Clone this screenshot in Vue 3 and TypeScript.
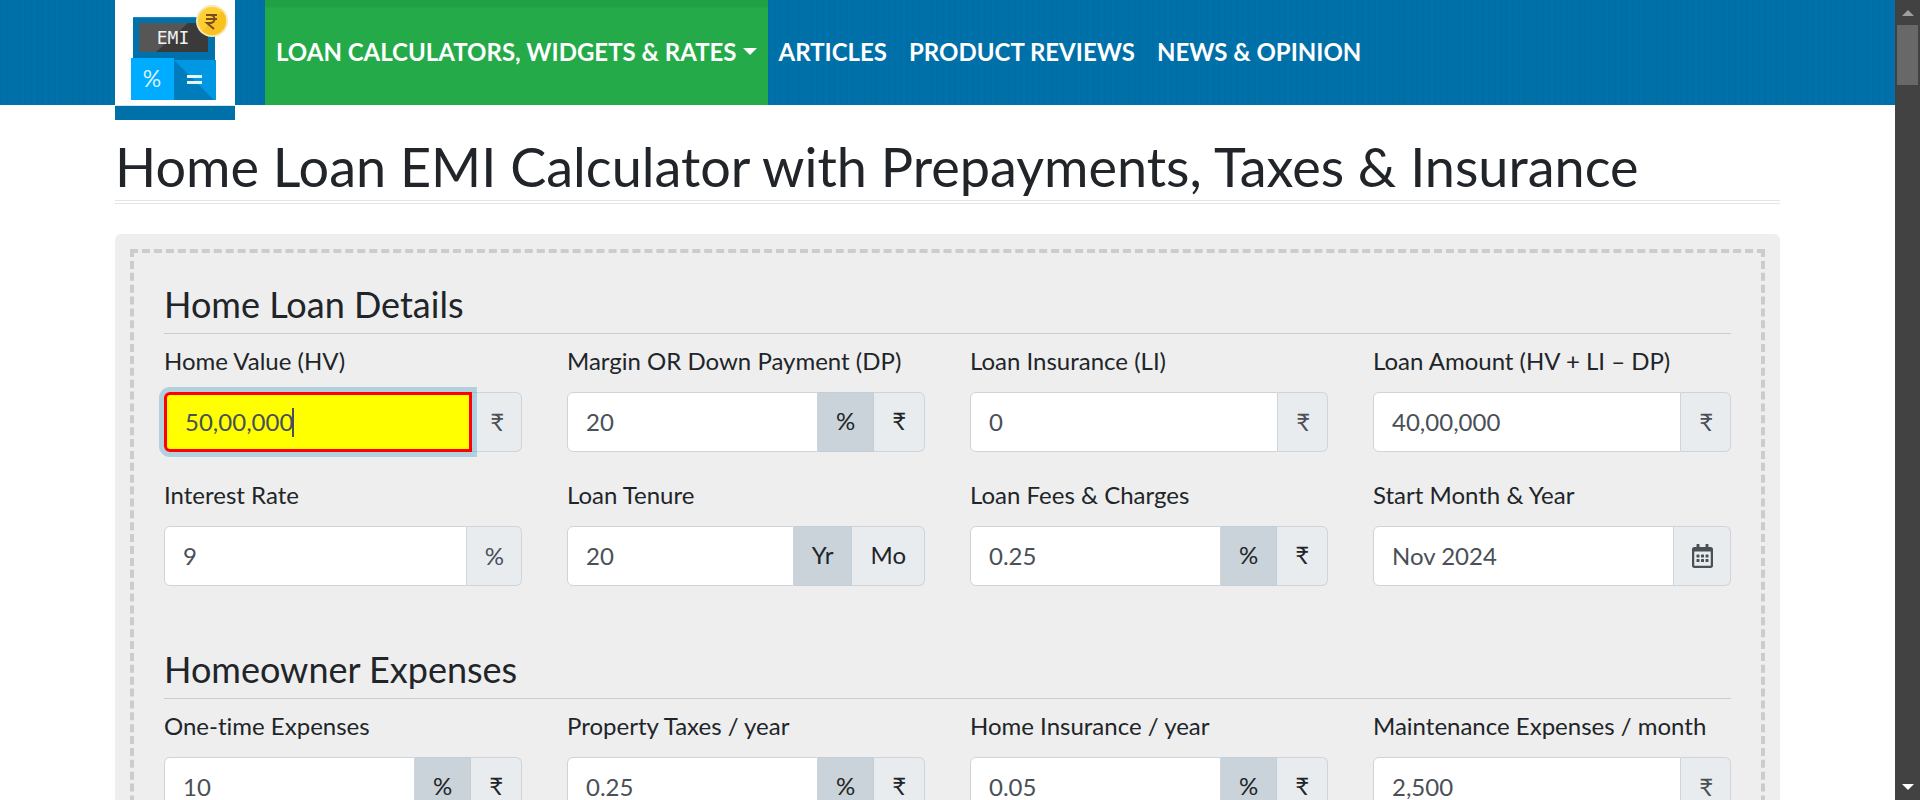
<script setup lang="ts">
import { reactive } from 'vue'

interface Field {
  id: string
  label: string
  value: string
  addon?: string
  icon?: boolean
  options?: string[]
  selected?: string
  active?: boolean
}

interface Section {
  title: string
  fields: Field[]
}

const navLinks: string[] = ['ARTICLES', 'PRODUCT REVIEWS', 'NEWS & OPINION']

const sections = reactive<Section[]>([
  {
    title: 'Home Loan Details',
    fields: [
      { id: 'home-value', label: 'Home Value (HV)', value: '50,00,000', addon: '₹', active: true },
      { id: 'down-payment', label: 'Margin OR Down Payment (DP)', value: '20', options: ['%', '₹'], selected: '%' },
      { id: 'loan-insurance', label: 'Loan Insurance (LI)', value: '0', addon: '₹' },
      { id: 'loan-amount', label: 'Loan Amount (HV + LI – DP)', value: '40,00,000', addon: '₹' },
      { id: 'interest-rate', label: 'Interest Rate', value: '9', addon: '%' },
      { id: 'loan-tenure', label: 'Loan Tenure', value: '20', options: ['Yr', 'Mo'], selected: 'Yr' },
      { id: 'loan-fees', label: 'Loan Fees & Charges', value: '0.25', options: ['%', '₹'], selected: '%' },
      { id: 'start-month', label: 'Start Month & Year', value: 'Nov 2024', icon: true },
    ],
  },
  {
    title: 'Homeowner Expenses',
    fields: [
      { id: 'one-time', label: 'One-time Expenses', value: '10', options: ['%', '₹'], selected: '%' },
      { id: 'property-taxes', label: 'Property Taxes / year', value: '0.25', options: ['%', '₹'], selected: '%' },
      { id: 'home-insurance', label: 'Home Insurance / year', value: '0.05', options: ['%', '₹'], selected: '%' },
      { id: 'maintenance', label: 'Maintenance Expenses / month', value: '2,500', addon: '₹' },
    ],
  },
])
</script>

<template>
  <div class="window">
    <div class="page">
      <header class="topbar">
        <a class="logo" href="#" aria-label="EMI Calculator home">
          <svg width="120" height="105" viewBox="0 0 120 105" aria-hidden="true">
            <rect x="18" y="17" width="82" height="43" fill="#0071ab" />
            <path d="M18 17H100V18H18Z" fill="#1a8cc4" />
            <rect x="24" y="23" width="69" height="29" fill="#565656" />
            <path d="M41 52 73 23H93V52Z" fill="#3a3a3a" />
            <rect x="16" y="58" width="43" height="42" fill="#00acff" />
            <rect x="59" y="60" width="42" height="40" fill="#0098e3" />
            <path d="M59 60 99 100H59Z" fill="#007cbd" />
            <text x="58" y="44" class="logo-emi">EMI</text>
            <text x="37" y="87" class="logo-percent">%</text>
            <path d="M72 75H87V78H72ZM72 81H87V84H72Z" fill="#e6f5fc" />
            <circle cx="97" cy="21" r="16" fill="#f7e7b4" />
            <circle cx="97" cy="21" r="14" fill="#ffd034" />
            <path d="M87 31 107 11A14 14 0 0 1 87 31Z" fill="#f8c221" />
            <path d="M91 15H102M91 19H102M92 15H95C101 15 101 23 95 23H92L99 29" fill="none" stroke="#7c4a1b" stroke-width="2" />
          </svg>
        </a>
        <nav class="nav" aria-label="Main">
          <a class="nav-link nav-current" href="#">LOAN CALCULATORS, WIDGETS &amp; RATES<span class="caret-down"></span></a>
          <a v-for="link in navLinks" :key="link" class="nav-link" href="#">{{ link }}</a>
        </nav>
      </header>

      <main class="content">
        <h1 class="title">Home Loan EMI Calculator with Prepayments, Taxes &amp; Insurance</h1>
        <form class="card" @submit.prevent>
          <div class="card-inner">
            <section v-for="section in sections" :key="section.title" class="section">
              <h2 class="section-title">{{ section.title }}</h2>
              <div class="grid">
                <div v-for="field in section.fields" :key="field.id" class="field">
                  <label class="field-label" :for="field.id">{{ field.label }}</label>
                  <div class="group">
                    <input
                      :id="field.id"
                      v-model="field.value"
                      class="control"
                      :class="{ 'control-active': field.active }"
                      type="text"
                    />
                    <span v-if="field.active" class="text-cursor"></span>
                    <span v-if="field.addon" class="addon">{{ field.addon }}</span>
                    <span v-if="field.icon" class="addon">
                      <svg width="21" height="24" viewBox="0 0 448 512" aria-hidden="true">
                        <path
                          fill="currentColor"
                          d="M148 288h-40c-6.600 0-12-5.400-12-12v-40c0-6.600 5.400-12 12-12h40c6.600 0 12 5.400 12 12v40c0 6.600-5.400 12-12 12zm108-12v-40c0-6.600-5.400-12-12-12h-40c-6.600 0-12 5.400-12 12v40c0 6.600 5.400 12 12 12h40c6.600 0 12-5.400 12-12zm96 0v-40c0-6.600-5.400-12-12-12h-40c-6.600 0-12 5.400-12 12v40c0 6.600 5.400 12 12 12h40c6.600 0 12-5.400 12-12zm-96 96v-40c0-6.600-5.400-12-12-12h-40c-6.600 0-12 5.400-12 12v40c0 6.600 5.400 12 12 12h40c6.600 0 12-5.400 12-12zm-96 0v-40c0-6.600-5.400-12-12-12h-40c-6.600 0-12 5.400-12 12v40c0 6.600 5.400 12 12 12h40c6.600 0 12-5.400 12-12zm192 0v-40c0-6.600-5.400-12-12-12h-40c-6.600 0-12 5.400-12 12v40c0 6.600 5.400 12 12 12h40c6.600 0 12-5.400 12-12zm96-260v352c0 26.500-21.500 48-48 48H48c-26.500 0-48-21.500-48-48V112c0-26.500 21.500-48 48-48h48V12c0-6.600 5.400-12 12-12h40c6.600 0 12 5.400 12 12v52h128V12c0-6.600 5.400-12 12-12h40c6.600 0 12 5.400 12 12v52h48c26.500 0 48 21.500 48 48zm-48 346V160H48v298c0 3.300 2.700 6 6 6h340c3.300 0 6-2.700 6-6z"
                        />
                      </svg>
                    </span>
                    <label
                      v-for="option in field.options"
                      :key="option"
                      class="unit"
                      :class="{ 'unit-selected': option === field.selected }"
                    >
                      <input v-model="field.selected" class="unit-radio" type="radio" :name="field.id + '-unit'" :value="option" />
                      {{ option }}
                    </label>
                  </div>
                </div>
              </div>
            </section>
          </div>
        </form>
      </main>
    </div>

    <div class="scrollbar" aria-hidden="true">
      <span class="arrow arrow-up"></span>
      <span class="thumb"></span>
      <span class="arrow arrow-down"></span>
    </div>
  </div>
</template>

<style>
body {
  margin: 0;
  overflow: hidden;
}
</style>

<style scoped>
.window {
  display: flex;
  height: 100vh;
  overflow: hidden;
  background: #fff;
  color: #212529;
  font-family: Lato, 'Liberation Sans', sans-serif;
  font-size: 24px;
  font-variant-ligatures: none;
  line-height: 36px;
}

.window *,
.window *::before {
  box-sizing: border-box;
}

.page {
  flex: 1;
  min-width: 0;
  overflow: hidden;
}

.topbar {
  display: flex;
  gap: 30px;
  height: 105px;
  padding: 0 115px;
  background:
    repeating-linear-gradient(90deg, rgba(0, 40, 90, 0.03) 0 2px, transparent 2px 6px),
    repeating-linear-gradient(90deg, rgba(0, 140, 200, 0.04) 0 3px, transparent 3px 11px),
    #0070a9;
}

.logo {
  position: relative;
  flex: none;
  width: 120px;
  background: #fff;
}

.logo::before {
  content: '';
  position: absolute;
  top: 105px;
  left: 0;
  width: 100%;
  height: 15px;
  border-top: 1px solid #d5e6ef;
  background: #0070a9;
}

.logo svg {
  display: block;
}

.logo-emi {
  fill: #f0f0f0;
  font-family: 'DejaVu Sans Mono', monospace;
  font-size: 18px;
  text-anchor: middle;
}

.logo-percent {
  fill: #d8f1ff;
  font-size: 23px;
  text-anchor: middle;
}

.nav {
  display: flex;
}

.nav-link {
  display: flex;
  align-items: center;
  padding: 0 11px 2px;
  color: #fff;
  font-weight: 700;
  text-decoration: none;
  white-space: nowrap;
}

.nav-current {
  background: linear-gradient(#21a045 0 7px, #24aa49 8px);
}

.caret-down {
  margin-left: 6px;
  border: 7px solid transparent;
  border-top-color: #fff;
  border-bottom: 0;
}

.content {
  padding: 29px 115px 0;
}

.title {
  margin: 0 0 30px;
  padding-bottom: 1px;
  border-bottom: 4px double #e5e5e5;
  font-size: 54px;
  font-weight: 400;
  line-height: 65px;
}

.card {
  padding: 15px;
  border-radius: 6px;
  background: #eee;
}

.card-inner {
  padding: 30px;
  border: 4px dashed #ccc;
}

.section + .section {
  margin-top: 62px;
}

.section-title {
  margin: 0 0 10px;
  padding-bottom: 8px;
  border-bottom: 1px solid #ccc;
  font-size: 36px;
  font-weight: 400;
  line-height: 42px;
}

.grid {
  display: grid;
  grid-template-columns: repeat(4, minmax(0, 1fr));
  gap: 26px 45px;
}

.field-label {
  display: block;
  margin-bottom: 14px;
  line-height: 34px;
  white-space: nowrap;
}

.group {
  position: relative;
  display: flex;
  height: 60px;
}

.control {
  flex: 1;
  min-width: 0;
  padding: 0 18px;
  border: 1px solid #ced4da;
  border-radius: 6px 0 0 6px;
  outline: 0;
  background: #fff;
  color: #495057;
  font: inherit;
}

.control-active {
  z-index: 1;
  border: 3px solid #f00;
  background: #ff0;
  box-shadow: 0 0 0 5px rgba(0, 120, 175, 0.25);
}

.text-cursor {
  position: absolute;
  z-index: 2;
  top: 16px;
  left: 128px;
  width: 2px;
  height: 29px;
  background: #495057;
}

.addon,
.unit {
  display: flex;
  align-items: center;
  padding: 0 18px;
  border: 1px solid #ced4da;
  border-left: 0;
  background: #e9ecef;
  color: #495057;
}

.addon {
  padding: 0 17px 0 18px;
}

.unit {
  position: relative;
  padding-bottom: 2px;
  color: #212529;
  cursor: pointer;
}

.addon:last-child,
.unit:last-child {
  border-radius: 0 6px 6px 0;
}

.unit-selected {
  border-color: #c4ced6;
  background: #cbd3da;
}

.unit-radio {
  position: absolute;
  margin: 0;
  opacity: 0;
}

.scrollbar {
  display: flex;
  flex: none;
  flex-direction: column;
  align-items: center;
  width: 25px;
  padding: 10px 0;
  background: #424242;
}

.arrow {
  border: 6px solid transparent;
}

.arrow-up {
  border-top: 0;
  border-bottom-color: #9f9f9f;
}

.arrow-down {
  margin-top: auto;
  border-top-color: #fff;
  border-bottom: 0;
}

.thumb {
  width: 21px;
  height: 60px;
  margin-top: 9px;
  background: #686868;
}
</style>
